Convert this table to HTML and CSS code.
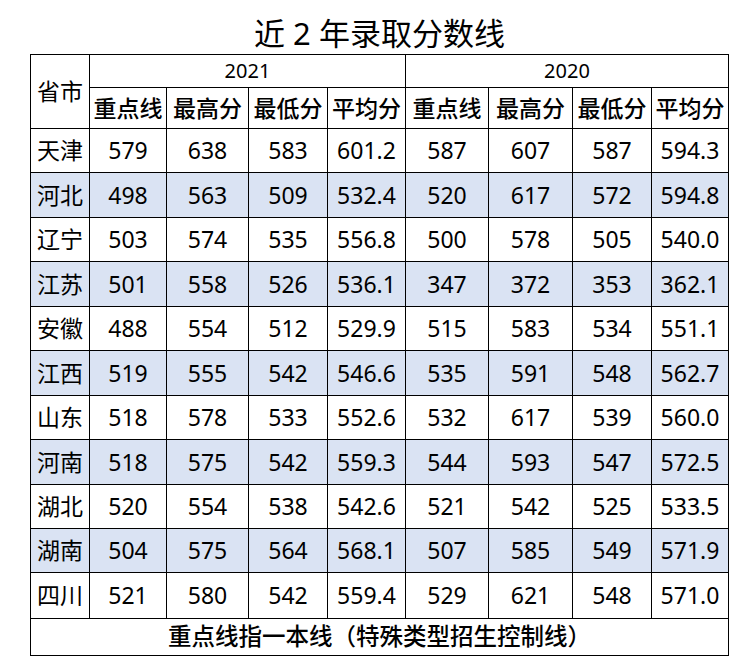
FILE: index.html
```html
<!DOCTYPE html>
<html lang="zh-CN">
<head>
<meta charset="utf-8">
<title>近2年录取分数线</title>
<link rel="stylesheet" href="styles.css">
</head>
<body>
<div class="page">
  <h1 class="title">近 2 年录取分数线</h1>
  <div class="sheet">
    <div class="cell prov-head">省市</div>
    <div class="cell year y2021">2021</div>
    <div class="cell year y2020">2020</div>
    <div class="cell head">重点线</div>
    <div class="cell head">最高分</div>
    <div class="cell head">最低分</div>
    <div class="cell head">平均分</div>
    <div class="cell head">重点线</div>
    <div class="cell head">最高分</div>
    <div class="cell head">最低分</div>
    <div class="cell head">平均分</div>

    <div class="cell name">天津</div><div class="cell">579</div><div class="cell">638</div><div class="cell">583</div><div class="cell">601.2</div><div class="cell">587</div><div class="cell">607</div><div class="cell">587</div><div class="cell">594.3</div>
    <div class="cell name alt">河北</div><div class="cell alt">498</div><div class="cell alt">563</div><div class="cell alt">509</div><div class="cell alt">532.4</div><div class="cell alt">520</div><div class="cell alt">617</div><div class="cell alt">572</div><div class="cell alt">594.8</div>
    <div class="cell name">辽宁</div><div class="cell">503</div><div class="cell">574</div><div class="cell">535</div><div class="cell">556.8</div><div class="cell">500</div><div class="cell">578</div><div class="cell">505</div><div class="cell">540.0</div>
    <div class="cell name alt">江苏</div><div class="cell alt">501</div><div class="cell alt">558</div><div class="cell alt">526</div><div class="cell alt">536.1</div><div class="cell alt">347</div><div class="cell alt">372</div><div class="cell alt">353</div><div class="cell alt">362.1</div>
    <div class="cell name">安徽</div><div class="cell">488</div><div class="cell">554</div><div class="cell">512</div><div class="cell">529.9</div><div class="cell">515</div><div class="cell">583</div><div class="cell">534</div><div class="cell">551.1</div>
    <div class="cell name alt">江西</div><div class="cell alt">519</div><div class="cell alt">555</div><div class="cell alt">542</div><div class="cell alt">546.6</div><div class="cell alt">535</div><div class="cell alt">591</div><div class="cell alt">548</div><div class="cell alt">562.7</div>
    <div class="cell name">山东</div><div class="cell">518</div><div class="cell">578</div><div class="cell">533</div><div class="cell">552.6</div><div class="cell">532</div><div class="cell">617</div><div class="cell">539</div><div class="cell">560.0</div>
    <div class="cell name alt">河南</div><div class="cell alt">518</div><div class="cell alt">575</div><div class="cell alt">542</div><div class="cell alt">559.3</div><div class="cell alt">544</div><div class="cell alt">593</div><div class="cell alt">547</div><div class="cell alt">572.5</div>
    <div class="cell name">湖北</div><div class="cell">520</div><div class="cell">554</div><div class="cell">538</div><div class="cell">542.6</div><div class="cell">521</div><div class="cell">542</div><div class="cell">525</div><div class="cell">533.5</div>
    <div class="cell name alt">湖南</div><div class="cell alt">504</div><div class="cell alt">575</div><div class="cell alt">564</div><div class="cell alt">568.1</div><div class="cell alt">507</div><div class="cell alt">585</div><div class="cell alt">549</div><div class="cell alt">571.9</div>
    <div class="cell name">四川</div><div class="cell">521</div><div class="cell">580</div><div class="cell">542</div><div class="cell">559.4</div><div class="cell">529</div><div class="cell">621</div><div class="cell">548</div><div class="cell">571.0</div>

    <div class="cell note">重点线指一本线（特殊类型招生控制线）</div>
  </div>
</div>
</body>
</html>
```

FILE: styles.css
```css
html, body {
  margin: 0;
  padding: 0;
  background: #ffffff;
}

body {
  font-family: "Noto Sans", "Noto Sans CJK SC", sans-serif;
  color: #000000;
}

.page {
  width: 748px;
  padding-left: 30px;
  box-sizing: border-box;
}

.title {
  width: 699px;
  height: 54px;
  margin: 0;
  box-sizing: border-box;
  padding-bottom: 5px;
  display: flex;
  align-items: flex-end;
  justify-content: center;
  font-size: 31px;
  font-weight: 400;
  line-height: 1;
}

.sheet {
  display: grid;
  width: max-content;
  grid-template-columns: 58px 76px 81px 78px 77px 82px 83px 78px 76px;
  grid-template-rows: 32px 40px 43px 44px 43px 44px 43px 44px 43px 44px 43px 43px 45px 36px;
  gap: 1px;
  background: #000000;
  border: 1px solid #000000;
}

.cell {
  background: #ffffff;
  display: flex;
  align-items: center;
  justify-content: center;
  font-size: 23px;
  line-height: 1;
  white-space: nowrap;
}

.alt {
  background: #dae3f3;
}

.prov-head {
  grid-row: 1 / span 2;
  font-size: 23px;
}

.year {
  font-size: 20px;
}

.y2021 {
  grid-column: 2 / span 4;
}

.y2020 {
  grid-column: 6 / span 4;
}

.head {
  font-size: 23px;
  font-weight: 500;
}

.name {
  font-size: 23px;
}

.note {
  grid-column: 1 / span 9;
  font-size: 23.5px;
  font-weight: 500;
}
```
